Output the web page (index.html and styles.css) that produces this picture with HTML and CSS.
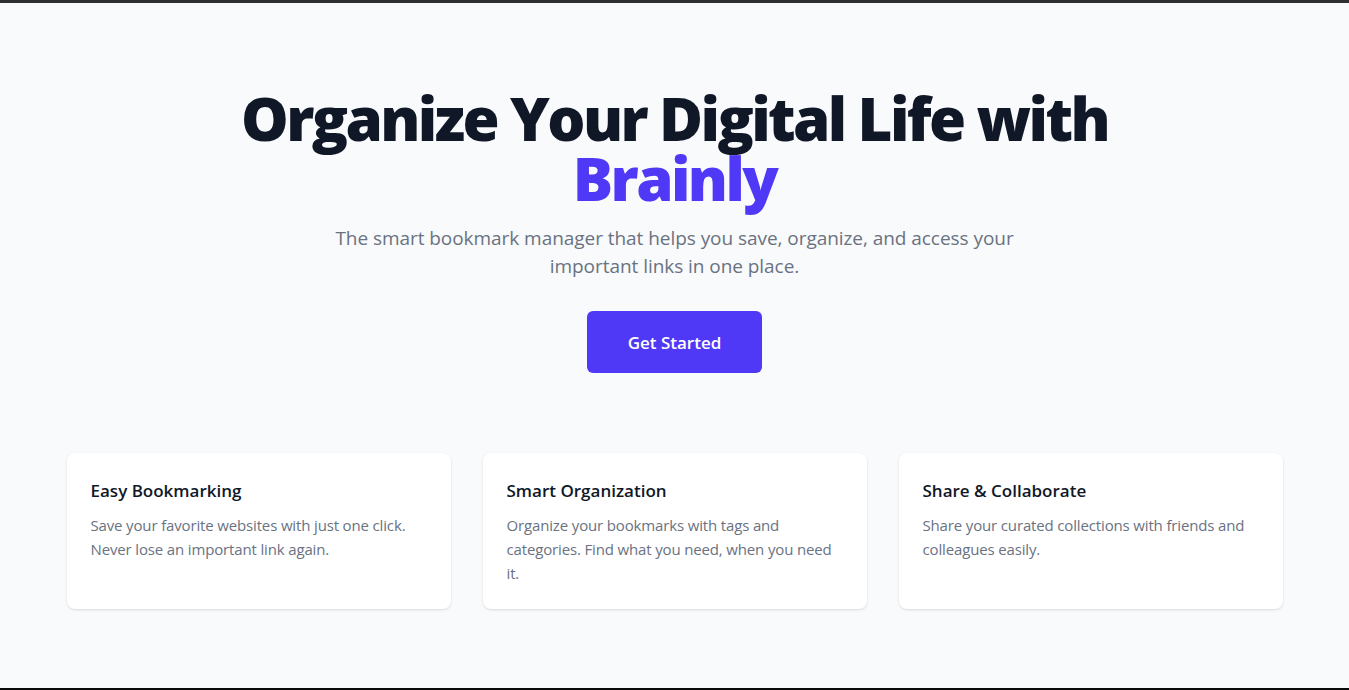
FILE: index.html
```html
<!DOCTYPE html>
<html lang="en">
<head>
<meta charset="utf-8">
<title>Brainly</title>
<link rel="stylesheet" href="styles.css">
</head>
<body>
<div class="page">
  <section class="hero">
    <h1 class="hero-title">Organize Your Digital Life with<br><span class="brand">Brainly</span></h1>
    <p class="hero-sub">The smart bookmark manager that helps you save, organize, and access your<br>important links in one place.</p>
    <a class="btn" href="#">Get Started</a>
  </section>
  <section class="features">
    <div class="card">
      <h3 class="card-title">Easy Bookmarking</h3>
      <p class="card-text">Save your favorite websites with just one click. Never lose an important link again.</p>
    </div>
    <div class="card">
      <h3 class="card-title">Smart Organization</h3>
      <p class="card-text">Organize your bookmarks with tags and categories. Find what you need, when you need it.</p>
    </div>
    <div class="card">
      <h3 class="card-title">Share &amp; Collaborate</h3>
      <p class="card-text">Share your curated collections with friends and colleagues easily.</p>
    </div>
  </section>
</div>
</body>
</html>
```
FILE: styles.css
```css
* { box-sizing: border-box; }
html, body { margin: 0; padding: 0; }
body {
  background: #f9fafb;
  font-family: "Open Sans", "Noto Sans", sans-serif;
  color: #101828;
}
.page {
  height: 690px;
  border-top: 3px solid #2f2f31;
  border-bottom: 2px solid #0a0a0a;
  padding-top: 85px;
  overflow: hidden;
}
.hero {
  display: flex;
  flex-direction: column;
  align-items: center;
  text-align: center;
}
.hero-title {
  margin: 0;
  font-size: 60px;
  line-height: 60px;
  font-weight: 800;
  letter-spacing: -2.6px;
  color: #101828;
}
.brand { color: #4f39f6; }
.hero-sub {
  margin: 16px 0 0;
  font-size: 19px;
  line-height: 28px;
  letter-spacing: -0.05px;
  color: #6a7282;
}
.btn {
  margin-top: 31px;
  display: flex;
  align-items: center;
  justify-content: center;
  width: 175px;
  height: 62px;
  background: #4f39f6;
  color: #fff;
  border-radius: 6px;
  font-size: 17px;
  font-weight: 600;
  text-decoration: none;
}
.features {
  max-width: 1280px;
  margin: 80px auto 0;
  padding: 0 32px;
  display: grid;
  grid-template-columns: repeat(3, 1fr);
  gap: 32px;
}
.card {
  background: #fff;
  border-radius: 8px;
  padding: 24px;
  box-shadow: 0 1px 3px rgba(0,0,0,0.1), 0 1px 2px -1px rgba(0,0,0,0.1);
}
.card-title {
  margin: 0 0 8px;
  font-size: 17px;
  line-height: 28px;
  font-weight: 600;
  color: #101828;
}
.card-text {
  margin: 0;
  font-size: 15px;
  line-height: 24px;
  letter-spacing: -0.15px;
  color: #6a7282;
}
```
